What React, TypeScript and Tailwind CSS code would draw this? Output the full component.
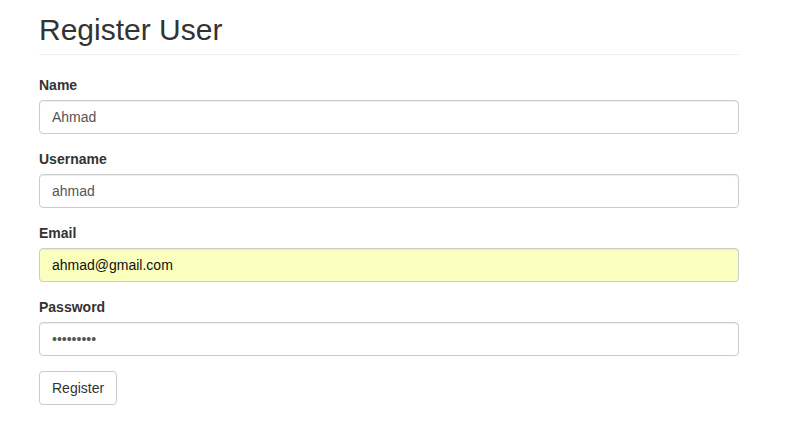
const fields = [
  { label: "Name", value: "Ahmad", type: "text", autofill: false },
  { label: "Username", value: "ahmad", type: "text", autofill: false },
  { label: "Email", value: "ahmad@gmail.com", type: "text", autofill: true },
  { label: "Password", value: "123456789", type: "password", autofill: false },
];

const App = () => {
  return (
    <div className="min-h-screen w-full bg-white font-['Liberation_Sans',Arial,sans-serif] text-[14px] text-[#333]">
      <div className="ml-[39px] w-[700px]">
        <div className="pt-[13px] pb-2 border-b border-[#eee]">
          <h1 className="text-[30px] leading-[33px] font-normal text-[#333]">Register User</h1>
        </div>
        <form className="mt-5 flex flex-col gap-[15px]">
          {fields.map((f) => (
            <div key={f.label} className="flex flex-col gap-[5px]">
              <label className="font-bold leading-5">{f.label}</label>
              <input
                type={f.type}
                readOnly
                defaultValue={f.value}
                className={`h-[34px] w-full rounded border border-[#ccc] px-3 py-1.5 leading-5 outline-none shadow-[inset_0_1px_1px_rgba(0,0,0,0.075)] ${
                  f.autofill ? "bg-[#faffbd] text-[#111]" : "bg-white text-[#555]"
                }`}
              />
            </div>
          ))}
          <div>
            <button
              type="button"
              className="h-[34px] rounded border border-[#ccc] bg-white px-3 py-1.5 leading-5 text-[#333]"
            >
              Register
            </button>
          </div>
        </form>
      </div>
    </div>
  );
};

export default App;
